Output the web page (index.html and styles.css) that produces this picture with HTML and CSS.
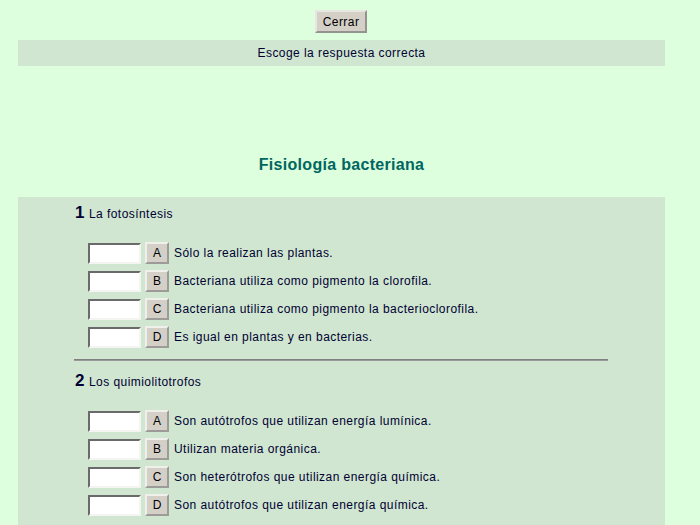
FILE: index.html
```html
<!DOCTYPE html>
<html lang="es">
<head>
<meta charset="utf-8">
<title>Fisiología bacteriana</title>
<link rel="stylesheet" href="styles.css">
</head>
<body>
<div class="top"><button class="close">Cerrar</button></div>
<div class="band">Escoge la respuesta correcta</div>
<h1 class="title">Fisiología bacteriana</h1>
<div class="panel">
  <div class="question">
    <div class="qhead"><span class="num">1</span><span class="qtext">La fotosíntesis</span></div>
    <div class="options">
      <div class="opt"><input class="box" type="text"><button class="letter">A</button><span class="otext">Sólo la realizan las plantas.</span></div>
      <div class="opt"><input class="box" type="text"><button class="letter">B</button><span class="otext">Bacteriana utiliza como pigmento la clorofila.</span></div>
      <div class="opt"><input class="box" type="text"><button class="letter">C</button><span class="otext">Bacteriana utiliza como pigmento la bacterioclorofila.</span></div>
      <div class="opt"><input class="box" type="text"><button class="letter">D</button><span class="otext">Es igual en plantas y en bacterias.</span></div>
    </div>
  </div>
  <hr class="sep">
  <div class="question">
    <div class="qhead"><span class="num">2</span><span class="qtext">Los quimiolitotrofos</span></div>
    <div class="options">
      <div class="opt"><input class="box" type="text"><button class="letter">A</button><span class="otext">Son autótrofos que utilizan energía lumínica.</span></div>
      <div class="opt"><input class="box" type="text"><button class="letter">B</button><span class="otext">Utilizan materia orgánica.</span></div>
      <div class="opt"><input class="box" type="text"><button class="letter">C</button><span class="otext">Son heterótrofos que utilizan energía química.</span></div>
      <div class="opt"><input class="box" type="text"><button class="letter">D</button><span class="otext">Son autótrofos que utilizan energía química.</span></div>
    </div>
  </div>
</div>
</body>
</html>
```
FILE: styles.css
```css
html, body {
  margin: 0;
  padding: 0;
  background: #ddffdd;
  font-family: "Liberation Sans", Arial, sans-serif;
  color: #000033;
  font-size: 12px;
  letter-spacing: 0.45px;
}
.top {
  padding-top: 10px;
  display: flex;
  justify-content: center;
  padding-right: 18px;
}
.close {
  width: 52px;
  height: 23px;
  font-family: "Liberation Sans", Arial, sans-serif;
  font-size: 12px;
  letter-spacing: 0.45px;
  color: #000;
  background: #d4d0c8;
  border: 2px outset #e8e6e0;
  padding: 0;
}
.band {
  margin: 7px 0 0 18px;
  width: 647px;
  height: 26px;
  line-height: 26px;
  background: #d0e6d0;
  text-align: center;
}
.title {
  margin: 89px 0 0 18px;
  width: 647px;
  text-align: center;
  font-size: 16px;
  line-height: 20px;
  font-weight: bold;
  letter-spacing: 0.3px;
  color: #006660;
  height: 20px;
}
.panel {
  margin: 22px 0 0 18px;
  width: 647px;
  background: #d0e6d0;
  padding: 6px 0 20px 56px;
  box-sizing: border-box;
}
.qhead {
  display: flex;
  align-items: baseline;
  height: 20px;
  line-height: 20px;
  padding-left: 1px;
}
.num {
  font-size: 17px;
  font-weight: bold;
  margin-right: 4px;
}
.options {
  margin: 19px 0 0 14px;
  display: flex;
  flex-direction: column;
  gap: 6px;
}
.opt {
  display: flex;
  align-items: center;
  height: 22px;
}
.box {
  width: 53px;
  height: 21px;
  box-sizing: border-box;
  border: 2px solid #f4f4f0;
  border-top-color: #6a6a6a;
  border-left-color: #6a6a6a;
  background: #fff;
  margin: 0 4px 0 0;
  padding: 0;
}
.letter {
  width: 24px;
  height: 22px;
  padding: 0;
  background: #d4d0c8;
  border: 2px outset #f0efea;
  font-family: "Liberation Sans", Arial, sans-serif;
  font-size: 12px;
  color: #000;
  margin-right: 5px;
}
.sep {
  margin: 11px 0 10px 0;
  width: 534px;
  height: 0;
  border: 0;
  border-top: 1px solid #808080;
  border-bottom: 1px solid #999;
}
```
